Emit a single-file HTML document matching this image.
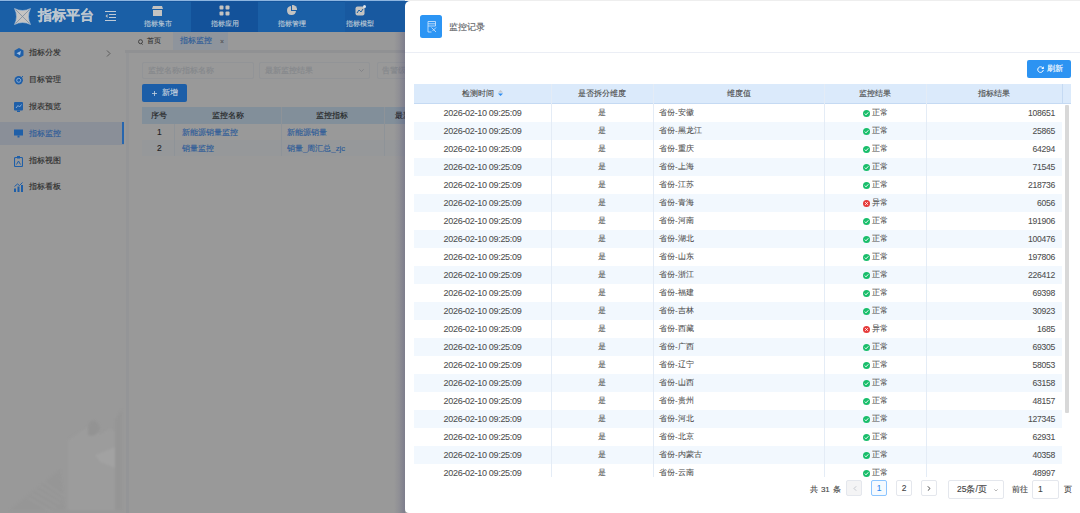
<!DOCTYPE html>
<html><head><meta charset="utf-8">
<style>
*{box-sizing:border-box;margin:0;padding:0}
html,body{width:1080px;height:513px;overflow:hidden;background:#999;font-family:"Liberation Sans",sans-serif;-webkit-text-stroke-width:0.12px}
.abs{position:absolute}
#page{position:absolute;left:0;top:0;width:1080px;height:513px;overflow:hidden;background:#999}
/* header */
#hdr{position:absolute;left:0;top:0;width:1080px;height:31.5px;background:#1a5fa6}
#topline{position:absolute;left:0;top:0;width:1080px;height:1px;background:#8db5e0}#topline2{position:absolute;left:0;top:1px;width:1080px;height:1px;background:#15559c}
.logo-t{position:absolute;left:38px;top:7px;font-size:13.5px;font-weight:bold;color:#bcc6cf;line-height:17px}
.nav{position:absolute;top:1px;height:30.5px;width:67px;text-align:center;color:#bfcad6}
.nav .t{position:absolute;left:0;right:0;top:18px;font-size:7px;line-height:9px}
.nav svg{position:absolute;left:28px;top:4px}
/* sidebar */
#side{position:absolute;left:0;top:31.5px;width:125px;height:482px;background:#999}
#sideb{position:absolute;left:126px;top:50px;width:3px;height:464px;background:#949597}
.mi{position:absolute;left:0;width:124px;height:23px;font-size:8.2px;color:#2b2b2b;line-height:23px}
.mi .tx{position:absolute;left:29px;top:0}
.mi svg{position:absolute;left:14px;top:7px}
.mi.act{background:#8a8f98;color:#2a5a98}
.mi.act:after{content:"";position:absolute;right:0;top:0;width:2.4px;height:22.5px;background:#2766ae}
/* main */
#tabs{position:absolute;left:125px;top:31.5px;width:955px;height:18.5px;background:#999}
#gap{position:absolute;left:125px;top:50px;width:955px;height:3px;background:#909193}
.inp{position:absolute;height:17.5px;border:1px solid #929497;border-radius:2px;background:#999;font-size:7.8px;color:#84878b;line-height:15.5px;padding-left:4.5px}
.btn-add{position:absolute;left:142px;top:84px;width:45px;height:18px;background:#1c5ea8;border-radius:2px;color:#c8d3df;font-size:8px;line-height:18px;text-align:center}
.ml{position:absolute;font-size:8px;line-height:11px}
/* drawer */
#shadow{position:absolute;left:394px;top:31.5px;width:11px;height:482px;background:linear-gradient(to right,rgba(60,60,110,0),rgba(60,60,110,.1) 45%,rgba(60,60,110,.3))}
#drawer{position:absolute;left:405px;top:1px;width:680px;height:511.5px;background:#fff;border-radius:5px 0 0 4px}
#dtop{position:absolute;left:405px;top:0;width:675px;height:1px;background:#eeeeee}
#dh{position:absolute;left:0;top:0;width:675px;height:52px;border-bottom:1px solid #ebeef5}
#dicon{position:absolute;left:15px;top:14px;width:22px;height:22.5px;background:#2c95f4;border-radius:2.5px}
#dtitle{position:absolute;left:44px;top:21px;font-size:9px;color:#606266;line-height:11px}
#refresh{position:absolute;left:621.5px;top:59px;width:44.5px;height:18px;background:#2c93f2;border-radius:2px;color:#fff;font-size:8.5px;line-height:18px}
#tbl{position:absolute;left:9px;top:83px;width:657px;height:392.5px;overflow:hidden}
.th{position:absolute;left:0;top:0;width:657px;height:20px;background:#dbeafb;border-bottom:1px solid #c5daf3}
.th div{position:absolute;top:0;height:20px;line-height:20px;font-size:8px;color:#4a4a4a;text-align:center}
.row{position:absolute;left:0;width:648px;height:18px;font-size:8px;color:#4d4d4d;line-height:18px;-webkit-text-stroke-width:0.06px}
.row.s{background:#f2f8fe}
.row div{position:absolute;top:0;height:18px}
.vl{position:absolute;top:0;width:1px;height:394px;background:#e4ecf6}
.c1{left:0;width:137px;text-align:center;letter-spacing:-0.3px;font-size:9px}
.c2{left:137px;width:102px;text-align:center}
.c3{left:245px;width:160px}
.c4{left:410px;width:102px;text-align:center}
.c5{left:512px;width:129px;text-align:right;font-size:8.6px;letter-spacing:-0.3px}
.ck{display:inline-block;vertical-align:-1.5px;margin-right:2px}
#scroll{position:absolute;left:651px;top:20.5px;width:3.8px;height:308px;background:#d8d8d8;border-radius:1px}
.pg{position:absolute;top:479.5px;height:17px;font-size:8px;color:#444;line-height:17px}
.pb{position:absolute;top:479.2px;width:16px;height:16px;border:1px solid #e4e7ed;border-radius:2px;background:#fff;text-align:center;line-height:14px;font-size:8.5px;color:#444}
</style></head><body>
<div id="page">
<div id="hdr">
  <div id="topline"></div><div id="topline2"></div>
  <svg class="abs" style="left:14px;top:8px" width="17" height="17" viewBox="0 0 17 17">
    <path d="M0.5 0.5 Q8.5 4.5 16.5 0.5 Q12.5 8.5 16.5 16.5 Q8.5 12.5 0.5 16.5 Q4.5 8.5 0.5 0.5Z" fill="#c6c4c2" stroke="#a9bfd6" stroke-width="0.6"/>
    <path d="M1.5 1.5 L15.5 15.5 M15.5 1.5 L1.5 15.5" stroke="#6e8499" stroke-width="0.7"/>
  </svg>
  <div class="logo-t">指标平台</div>
  <svg class="abs" style="left:105px;top:11px" width="11" height="10" viewBox="0 0 11 10">
    <path d="M0 0.5H11M4 3.5H11M4 6.5H11M0 9.5H11" stroke="#bfcad6" stroke-width="1"/>
    <path d="M2.5 3L0.5 5L2.5 7Z" fill="#c4c3c1"/>
  </svg>
  <div class="nav" style="left:124px"><svg width="11" height="11" viewBox="0 0 11 11"><path d="M1 1H10L11 4H0Z M1 5H10V11H1Z" fill="#c4c3c1"/></svg><div class="t">指标集市</div></div>
  <div class="nav" style="left:191px;background:#13529a"><svg width="11" height="11" viewBox="0 0 11 11"><rect x="0.5" y="0.5" width="4" height="4" rx="1" fill="#c4c3c1"/><rect x="6.5" y="0.5" width="4" height="4" rx="1" fill="#c4c3c1"/><rect x="0.5" y="6.5" width="4" height="4" rx="1" fill="#c4c3c1"/><rect x="6.5" y="6.5" width="4" height="4" rx="1" fill="#c4c3c1"/></svg><div class="t">指标应用</div></div>
  <div class="nav" style="left:258px"><svg width="11" height="11" viewBox="0 0 11 11"><path d="M5 1A4.5 4.5 0 1 0 10 6H5Z" fill="#c4c3c1"/><path d="M6 0A4.5 4.5 0 0 1 11 5H6Z" fill="#c4c3c1"/></svg><div class="t">指标管理</div></div>
  <div class="abs" style="left:345px;top:1px;width:60px;height:30.5px;background:#1859a0"></div><div class="nav" style="left:325px;width:70px"><svg width="11" height="11" viewBox="0 0 11 11" style="left:30px"><rect x="0.5" y="1.5" width="9" height="9" rx="2" fill="#c4c3c1"/><path d="M2 8L4 5L6 7L8 4" stroke="#1a5fa6" stroke-width="1" fill="none"/><circle cx="9.5" cy="1.5" r="1.5" fill="#dfe6ee"/></svg><div class="t">指标模型</div></div>
</div>

<div id="side">
  <div class="mi" style="top:9.3px"><svg width="10" height="10" viewBox="0 0 10 10"><path d="M5 0L9.5 2.5V7.5L5 10L0.5 7.5V2.5Z" fill="#1f5fa8"/><path d="M2.5 5.2L7 3L6 7.2Z" fill="#9fbde0"/></svg><span class="tx">指标分发</span>
    <svg style="left:106px;top:9.3px" width="5" height="7" viewBox="0 0 5 7"><path d="M1 0.5L4 3.5L1 6.5" stroke="#555" fill="none" stroke-width="0.9"/></svg></div>
  <div class="mi" style="top:36.2px"><svg width="10" height="10" viewBox="0 0 10 10"><circle cx="4.7" cy="5.3" r="4.2" fill="#1f5fa8"/><circle cx="4.7" cy="5.3" r="2" fill="none" stroke="#9fbde0" stroke-width="0.8"/><path d="M5 5L9 1" stroke="#1f5fa8" stroke-width="1"/></svg><span class="tx">目标管理</span></div>
  <div class="mi" style="top:63.1px"><svg width="9" height="10" viewBox="0 0 9 10"><rect x="0" y="0" width="9" height="8.5" rx="1" fill="#1f5fa8"/><path d="M2 6L4 3.5L5.5 5L7.5 2.5" stroke="#9fbde0" stroke-width="0.8" fill="none"/><rect x="3" y="8.5" width="3" height="1.5" fill="#1f5fa8"/></svg><span class="tx">报表预览</span></div>
  <div class="mi act" style="top:90px"><svg width="9" height="9" viewBox="0 0 9 9"><rect x="0" y="0.5" width="9" height="6" fill="#1f5fa8"/><rect x="3.5" y="6.5" width="2" height="2" fill="#1f5fa8"/></svg><span class="tx">指标监控</span></div>
  <div class="mi" style="top:117px"><svg width="9" height="11" viewBox="0 0 9 11"><rect x="0.5" y="1.5" width="8" height="9" rx="1" fill="none" stroke="#1f5fa8" stroke-width="1.1"/><rect x="3" y="0" width="3" height="2.5" fill="#1f5fa8"/><path d="M2.5 8.5L4.5 5L6.5 8.5" stroke="#1f5fa8" fill="none" stroke-width="1"/></svg><span class="tx">指标视图</span></div>
  <div class="mi" style="top:143.9px"><svg width="9" height="10" viewBox="0 0 9 10"><rect x="0" y="6.5" width="2" height="3.5" fill="#1f5fa8"/><rect x="3.5" y="4.5" width="2" height="5.5" fill="#1f5fa8"/><rect x="7" y="3" width="2" height="7" fill="#1f5fa8"/><path d="M0.5 4.5L3.5 2L5.5 3.5L8.5 0.5" stroke="#1f5fa8" fill="none" stroke-width="1"/></svg><span class="tx">指标看板</span></div>
</div>
<div id="sideb"></div>
<svg class="abs" style="left:0;top:400px;filter:blur(1.2px)" width="125" height="113" viewBox="0 0 125 113">
  <path d="M10 110 L60 70 L65 110Z" fill="#969696"/>
  <path d="M28 98L52 112M32 94L56 108M36 90L60 104M40 86L62 100M44 82L64 96" stroke="#9f9f9f" stroke-width="1"/>
  <path d="M68 110 L68 40 L90 25 L100 35 L110 28 L120 35 L120 110Z" fill="#9c9c9c"/>
  <path d="M88 25 Q95 15 100 28 Q96 38 88 35Z" fill="#939393"/>
  <path d="M95 55 L120 45 L120 70 L100 62Z" fill="#a2a2a2"/>
  <path d="M115 20 L122 10 L122 110 L115 110Z" fill="#959595"/>
</svg>

<div id="tabs">
  <svg class="abs" style="left:13px;top:7px" width="5" height="6" viewBox="0 0 5 6"><circle cx="2.5" cy="2.7" r="2" fill="none" stroke="#3a3a3a" stroke-width="0.9"/><path d="M3.3 4.3L4.5 5.6" stroke="#3a3a3a" stroke-width="0.9"/></svg>
  <div class="abs" style="left:22px;top:4.5px;font-size:6.8px;color:#333;line-height:10px">首页</div>
  <div class="abs" style="left:48px;top:0;width:55px;height:18.5px;background:#8e949c"></div>
  <div class="abs" style="left:55px;top:4px;font-size:7.5px;color:#2a5a98;line-height:10px">指标监控</div>
  <div class="abs" style="left:95px;top:5.2px;font-size:7px;color:#555;line-height:10px">×</div>
</div>
<div id="gap"></div>
<div class="inp" style="left:142px;top:61.5px;width:112px">监控名称/指标名称</div>
<div class="inp" style="left:259px;top:61.5px;width:111px">最新监控结果<svg class="abs" style="left:99px;top:6.5px" width="5" height="3" viewBox="0 0 5 3"><path d="M0.3 0.3L2.5 2.5L4.7 0.3" stroke="#7d7f84" fill="none" stroke-width="0.8"/></svg></div>
<div class="inp" style="left:376.5px;top:61.5px;width:100px">告警级别</div>
<div class="btn-add"><svg class="abs" style="left:10px;top:6.5px" width="5" height="5" viewBox="0 0 5 5"><path d="M2.5 0V5M0 2.5H5" stroke="#c8d3df" stroke-width="0.8"/></svg><span class="abs" style="left:20px;top:0">新增</span></div>
<div class="abs" style="left:142px;top:107px;width:600px;height:17px;background:#828f9a"></div>
<div class="abs" style="left:142px;top:140px;width:600px;height:15.5px;background:#96989a"></div>
<div class="abs" style="left:174px;top:124px;width:1px;height:31.5px;background:#8e9398"></div>
<div class="abs" style="left:281px;top:107px;width:1px;height:48.5px;background:#8e9398"></div>
<div class="abs" style="left:384px;top:107px;width:1px;height:48.5px;background:#8e9398"></div>
<div class="ml abs" style="left:150.5px;top:110px;color:#1e1e1e">序号</div>
<div class="ml abs" style="left:212px;top:110px;color:#1e1e1e">监控名称</div>
<div class="ml abs" style="left:316px;top:110px;color:#1e1e1e">监控指标</div>
<div class="ml abs" style="left:395px;top:110px;color:#1e1e1e">最新</div>
<div class="ml abs" style="left:157px;top:127px;font-size:8.5px;color:#1e1e1e">1</div>
<div class="ml abs" style="left:157px;top:143px;font-size:8.5px;color:#1e1e1e">2</div>
<div class="ml abs" style="left:182px;top:127px;font-size:7.8px;color:#2a5a98">新能源销量监控</div>
<div class="ml abs" style="left:182px;top:143px;font-size:7.8px;color:#2a5a98">销量监控</div>
<div class="ml abs" style="left:287px;top:127px;font-size:7.8px;color:#2a5a98">新能源销量</div>
<div class="ml abs" style="left:287px;top:143px;font-size:7.8px;color:#2a5a98">销量_周汇总_zjc</div>

<div id="shadow"></div>
<div id="dtop"></div>
<div id="drawer">
  <div id="dh">
    <div id="dicon"><svg class="abs" style="left:6.5px;top:5.5px" width="10" height="12" viewBox="0 0 10 12"><path d="M1 0.5H8.5V5M1 0.5V11H4.5M1 2.8H8.5M1 5H8.5" stroke="#d5e8fc" fill="none" stroke-width="0.8"/><path d="M4.5 6.5L9 11M9 6.5L5.5 10" stroke="#d5e8fc" stroke-width="0.8" fill="none"/></svg></div>
    <div id="dtitle">监控记录</div>
  </div>
  <div id="refresh"><svg class="abs" style="left:10px;top:5.5px" width="7" height="7" viewBox="0 0 8 8"><path d="M6.6 2.2A3.2 3.2 0 1 0 7.2 4.6" stroke="#fff" fill="none" stroke-width="1.1"/><path d="M7.8 0.4V3.3H4.9Z" fill="#fff"/></svg><span class="abs" style="left:20.5px;top:0;font-size:8px">刷新</span></div>
  <div id="tbl">
    <div class="th">
      <div style="left:0;width:137px">检测时间<svg style="vertical-align:-1px;margin-left:4px" width="5" height="8" viewBox="0 0 5 8"><path d="M0 3.5L2.5 1L5 3.5Z" fill="#c0c4cc"/><path d="M0 4.5L2.5 7L5 4.5Z" fill="#2d8cf0"/></svg></div>
      <div style="left:137px;width:102px">是否拆分维度</div>
      <div style="left:239px;width:171px">维度值</div>
      <div style="left:410px;width:102px">监控结果</div>
      <div style="left:512px;width:136px">指标结果</div>
    </div>
<div class="row" style="top:20px"><div class="c1">2026-02-10 09:25:09</div><div class="c2">是</div><div class="c3">省份-安徽</div><div class="c4"><svg class="ck" width="7" height="7" viewBox="0 0 7 7"><circle cx="3.5" cy="3.5" r="3.5" fill="#19be6b"/><path d="M1.8 3.6L3 4.8L5.3 2.3" stroke="#fff" stroke-width="1" fill="none"/></svg>正常</div><div class="c5">108651</div></div>
<div class="row s" style="top:38px"><div class="c1">2026-02-10 09:25:09</div><div class="c2">是</div><div class="c3">省份-黑龙江</div><div class="c4"><svg class="ck" width="7" height="7" viewBox="0 0 7 7"><circle cx="3.5" cy="3.5" r="3.5" fill="#19be6b"/><path d="M1.8 3.6L3 4.8L5.3 2.3" stroke="#fff" stroke-width="1" fill="none"/></svg>正常</div><div class="c5">25865</div></div>
<div class="row" style="top:56px"><div class="c1">2026-02-10 09:25:09</div><div class="c2">是</div><div class="c3">省份-重庆</div><div class="c4"><svg class="ck" width="7" height="7" viewBox="0 0 7 7"><circle cx="3.5" cy="3.5" r="3.5" fill="#19be6b"/><path d="M1.8 3.6L3 4.8L5.3 2.3" stroke="#fff" stroke-width="1" fill="none"/></svg>正常</div><div class="c5">64294</div></div>
<div class="row s" style="top:74px"><div class="c1">2026-02-10 09:25:09</div><div class="c2">是</div><div class="c3">省份-上海</div><div class="c4"><svg class="ck" width="7" height="7" viewBox="0 0 7 7"><circle cx="3.5" cy="3.5" r="3.5" fill="#19be6b"/><path d="M1.8 3.6L3 4.8L5.3 2.3" stroke="#fff" stroke-width="1" fill="none"/></svg>正常</div><div class="c5">71545</div></div>
<div class="row" style="top:92px"><div class="c1">2026-02-10 09:25:09</div><div class="c2">是</div><div class="c3">省份-江苏</div><div class="c4"><svg class="ck" width="7" height="7" viewBox="0 0 7 7"><circle cx="3.5" cy="3.5" r="3.5" fill="#19be6b"/><path d="M1.8 3.6L3 4.8L5.3 2.3" stroke="#fff" stroke-width="1" fill="none"/></svg>正常</div><div class="c5">218736</div></div>
<div class="row s" style="top:110px"><div class="c1">2026-02-10 09:25:09</div><div class="c2">是</div><div class="c3">省份-青海</div><div class="c4"><svg class="ck" width="7" height="7" viewBox="0 0 7 7"><circle cx="3.5" cy="3.5" r="3.5" fill="#e63b3b"/><path d="M2.2 2.2L4.8 4.8M4.8 2.2L2.2 4.8" stroke="#fff" stroke-width="0.9"/></svg>异常</div><div class="c5">6056</div></div>
<div class="row" style="top:128px"><div class="c1">2026-02-10 09:25:09</div><div class="c2">是</div><div class="c3">省份-河南</div><div class="c4"><svg class="ck" width="7" height="7" viewBox="0 0 7 7"><circle cx="3.5" cy="3.5" r="3.5" fill="#19be6b"/><path d="M1.8 3.6L3 4.8L5.3 2.3" stroke="#fff" stroke-width="1" fill="none"/></svg>正常</div><div class="c5">191906</div></div>
<div class="row s" style="top:146px"><div class="c1">2026-02-10 09:25:09</div><div class="c2">是</div><div class="c3">省份-湖北</div><div class="c4"><svg class="ck" width="7" height="7" viewBox="0 0 7 7"><circle cx="3.5" cy="3.5" r="3.5" fill="#19be6b"/><path d="M1.8 3.6L3 4.8L5.3 2.3" stroke="#fff" stroke-width="1" fill="none"/></svg>正常</div><div class="c5">100476</div></div>
<div class="row" style="top:164px"><div class="c1">2026-02-10 09:25:09</div><div class="c2">是</div><div class="c3">省份-山东</div><div class="c4"><svg class="ck" width="7" height="7" viewBox="0 0 7 7"><circle cx="3.5" cy="3.5" r="3.5" fill="#19be6b"/><path d="M1.8 3.6L3 4.8L5.3 2.3" stroke="#fff" stroke-width="1" fill="none"/></svg>正常</div><div class="c5">197806</div></div>
<div class="row s" style="top:182px"><div class="c1">2026-02-10 09:25:09</div><div class="c2">是</div><div class="c3">省份-浙江</div><div class="c4"><svg class="ck" width="7" height="7" viewBox="0 0 7 7"><circle cx="3.5" cy="3.5" r="3.5" fill="#19be6b"/><path d="M1.8 3.6L3 4.8L5.3 2.3" stroke="#fff" stroke-width="1" fill="none"/></svg>正常</div><div class="c5">226412</div></div>
<div class="row" style="top:200px"><div class="c1">2026-02-10 09:25:09</div><div class="c2">是</div><div class="c3">省份-福建</div><div class="c4"><svg class="ck" width="7" height="7" viewBox="0 0 7 7"><circle cx="3.5" cy="3.5" r="3.5" fill="#19be6b"/><path d="M1.8 3.6L3 4.8L5.3 2.3" stroke="#fff" stroke-width="1" fill="none"/></svg>正常</div><div class="c5">69398</div></div>
<div class="row s" style="top:218px"><div class="c1">2026-02-10 09:25:09</div><div class="c2">是</div><div class="c3">省份-吉林</div><div class="c4"><svg class="ck" width="7" height="7" viewBox="0 0 7 7"><circle cx="3.5" cy="3.5" r="3.5" fill="#19be6b"/><path d="M1.8 3.6L3 4.8L5.3 2.3" stroke="#fff" stroke-width="1" fill="none"/></svg>正常</div><div class="c5">30923</div></div>
<div class="row" style="top:236px"><div class="c1">2026-02-10 09:25:09</div><div class="c2">是</div><div class="c3">省份-西藏</div><div class="c4"><svg class="ck" width="7" height="7" viewBox="0 0 7 7"><circle cx="3.5" cy="3.5" r="3.5" fill="#e63b3b"/><path d="M2.2 2.2L4.8 4.8M4.8 2.2L2.2 4.8" stroke="#fff" stroke-width="0.9"/></svg>异常</div><div class="c5">1685</div></div>
<div class="row s" style="top:254px"><div class="c1">2026-02-10 09:25:09</div><div class="c2">是</div><div class="c3">省份-广西</div><div class="c4"><svg class="ck" width="7" height="7" viewBox="0 0 7 7"><circle cx="3.5" cy="3.5" r="3.5" fill="#19be6b"/><path d="M1.8 3.6L3 4.8L5.3 2.3" stroke="#fff" stroke-width="1" fill="none"/></svg>正常</div><div class="c5">69305</div></div>
<div class="row" style="top:272px"><div class="c1">2026-02-10 09:25:09</div><div class="c2">是</div><div class="c3">省份-辽宁</div><div class="c4"><svg class="ck" width="7" height="7" viewBox="0 0 7 7"><circle cx="3.5" cy="3.5" r="3.5" fill="#19be6b"/><path d="M1.8 3.6L3 4.8L5.3 2.3" stroke="#fff" stroke-width="1" fill="none"/></svg>正常</div><div class="c5">58053</div></div>
<div class="row s" style="top:290px"><div class="c1">2026-02-10 09:25:09</div><div class="c2">是</div><div class="c3">省份-山西</div><div class="c4"><svg class="ck" width="7" height="7" viewBox="0 0 7 7"><circle cx="3.5" cy="3.5" r="3.5" fill="#19be6b"/><path d="M1.8 3.6L3 4.8L5.3 2.3" stroke="#fff" stroke-width="1" fill="none"/></svg>正常</div><div class="c5">63158</div></div>
<div class="row" style="top:308px"><div class="c1">2026-02-10 09:25:09</div><div class="c2">是</div><div class="c3">省份-贵州</div><div class="c4"><svg class="ck" width="7" height="7" viewBox="0 0 7 7"><circle cx="3.5" cy="3.5" r="3.5" fill="#19be6b"/><path d="M1.8 3.6L3 4.8L5.3 2.3" stroke="#fff" stroke-width="1" fill="none"/></svg>正常</div><div class="c5">48157</div></div>
<div class="row s" style="top:326px"><div class="c1">2026-02-10 09:25:09</div><div class="c2">是</div><div class="c3">省份-河北</div><div class="c4"><svg class="ck" width="7" height="7" viewBox="0 0 7 7"><circle cx="3.5" cy="3.5" r="3.5" fill="#19be6b"/><path d="M1.8 3.6L3 4.8L5.3 2.3" stroke="#fff" stroke-width="1" fill="none"/></svg>正常</div><div class="c5">127345</div></div>
<div class="row" style="top:344px"><div class="c1">2026-02-10 09:25:09</div><div class="c2">是</div><div class="c3">省份-北京</div><div class="c4"><svg class="ck" width="7" height="7" viewBox="0 0 7 7"><circle cx="3.5" cy="3.5" r="3.5" fill="#19be6b"/><path d="M1.8 3.6L3 4.8L5.3 2.3" stroke="#fff" stroke-width="1" fill="none"/></svg>正常</div><div class="c5">62931</div></div>
<div class="row s" style="top:362px"><div class="c1">2026-02-10 09:25:09</div><div class="c2">是</div><div class="c3">省份-内蒙古</div><div class="c4"><svg class="ck" width="7" height="7" viewBox="0 0 7 7"><circle cx="3.5" cy="3.5" r="3.5" fill="#19be6b"/><path d="M1.8 3.6L3 4.8L5.3 2.3" stroke="#fff" stroke-width="1" fill="none"/></svg>正常</div><div class="c5">40358</div></div>
<div class="row" style="top:380px"><div class="c1">2026-02-10 09:25:09</div><div class="c2">是</div><div class="c3">省份-云南</div><div class="c4"><svg class="ck" width="7" height="7" viewBox="0 0 7 7"><circle cx="3.5" cy="3.5" r="3.5" fill="#19be6b"/><path d="M1.8 3.6L3 4.8L5.3 2.3" stroke="#fff" stroke-width="1" fill="none"/></svg>正常</div><div class="c5">48997</div></div>

    <div class="vl" style="left:137px"></div>
    <div class="vl" style="left:239px"></div>
    <div class="vl" style="left:410px"></div>
    <div class="vl" style="left:512px"></div>
    <div class="vl" style="left:648px;height:20px;background:#c5daf3"></div>
    <div id="scroll"></div>
  </div>
  <div class="pg" style="left:404.5px;word-spacing:1.2px">共 31 条</div>
  <div class="pb" style="left:441px;background:#f4f4f5"><svg class="abs" style="left:5.5px;top:5px" width="4" height="5" viewBox="0 0 4 5"><path d="M3.2 0.3L1 2.5L3.2 4.7" stroke="#c0c4cc" fill="none" stroke-width="0.9"/></svg></div>
  <div class="pb" style="left:466px;border-color:#8cc5ff;color:#2d8cf0;background:#f5faff">1</div>
  <div class="pb" style="left:491px">2</div>
  <div class="pb" style="left:515.5px"><svg class="abs" style="left:5.5px;top:4.5px" width="4" height="5" viewBox="0 0 4 5"><path d="M0.8 0.3L3 2.5L0.8 4.7" stroke="#333" fill="none" stroke-width="0.9"/></svg></div>
  <div class="pb" style="left:543px;width:56px;height:18.5px;text-align:left;padding-left:8px;line-height:16.5px">25条/页<svg class="abs" style="left:44.5px;top:7.5px" width="4" height="2.5" viewBox="0 0 4 2.5"><path d="M0.3 0.3L2 2L3.7 0.3" stroke="#999" fill="none" stroke-width="0.7"/></svg></div>
  <div class="pg" style="left:607px">前往</div>
  <div class="pb" style="left:627px;width:27px;height:18.5px;text-align:left;padding-left:5px;line-height:16.5px">1</div>
  <div class="pg" style="left:659px">页</div>
</div>
</div>
</body></html>
